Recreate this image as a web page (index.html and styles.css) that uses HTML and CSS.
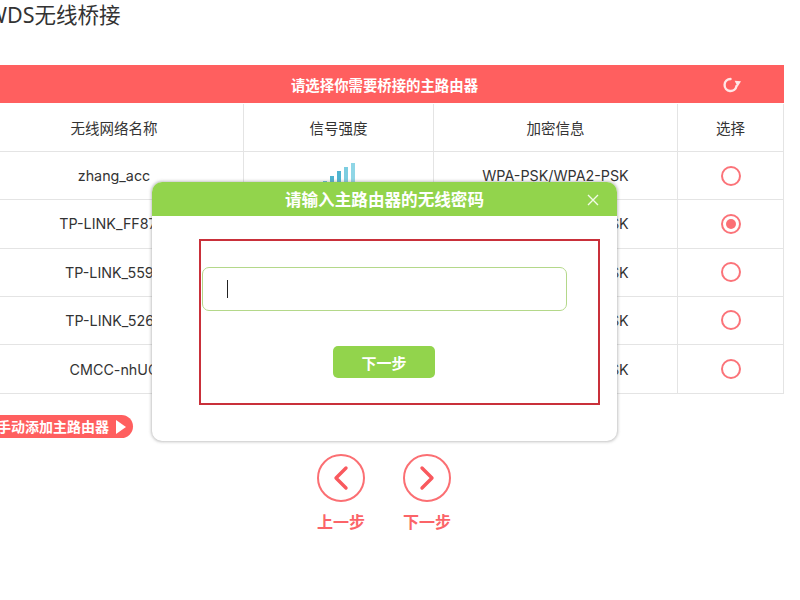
FILE: index.html
```html
<!DOCTYPE html>
<html lang="zh-CN">
<head>
<meta charset="utf-8">
<title>WDS无线桥接</title>
<link rel="stylesheet" href="styles.css">
</head>
<body>
<div class="page">
  <h1 class="title">WDS无线桥接</h1>
  <section class="panel">
    <div class="panel-head">
      <span>请选择你需要桥接的主路由器</span>
      <svg class="refresh" viewBox="0 0 20 20" width="20" height="20" aria-hidden="true">
        <path d="M9.5 5A6 6 0 1 0 15.5 12" fill="none" stroke="#ffe6e6" stroke-width="2.4" stroke-linecap="round"/>
        <path d="M13.6 6.8 20 7.2 16.6 12.8Z" fill="#ffe6e6"/>
      </svg>
    </div>
    <div class="grid">
      <div class="cell">无线网络名称</div><div class="cell">信号强度</div><div class="cell">加密信息</div><div class="cell last">选择</div>

      <div class="cell latin">zhang_acc</div>
      <div class="cell">
        <svg class="signal" viewBox="0 0 32 26" width="32" height="26" aria-hidden="true">
          <rect x="0" y="18" width="4" height="8" fill="#5dbcd6"/>
          <rect x="7" y="13" width="4" height="13" fill="#4fb4d0"/>
          <rect x="14" y="8" width="4" height="18" fill="#4fb4d0"/>
          <rect x="21" y="4" width="4" height="22" fill="#7ccde0"/>
          <rect x="28" y="0" width="4" height="26" fill="#8fd6e6"/>
        </svg>
      </div>
      <div class="cell latin">WPA-PSK/WPA2-PSK</div>
      <div class="cell last"><span class="radio"></span></div>

      <div class="cell latin offset">TP-LINK_FF87</div><div class="cell"></div><div class="cell latin">WPA-PSK/WPA2-PSK</div>
      <div class="cell last"><span class="radio on"></span></div>

      <div class="cell latin">TP-LINK_5594</div><div class="cell"></div><div class="cell latin">WPA-PSK/WPA2-PSK</div>
      <div class="cell last"><span class="radio"></span></div>

      <div class="cell latin">TP-LINK_5262</div><div class="cell"></div><div class="cell latin">WPA-PSK/WPA2-PSK</div>
      <div class="cell last"><span class="radio"></span></div>

      <div class="cell latin">CMCC-nhUC</div><div class="cell"></div><div class="cell latin">WPA-PSK/WPA2-PSK</div>
      <div class="cell last"><span class="radio"></span></div>
    </div>
  </section>

  <div class="manual">手动添加主路由器<svg class="tri" viewBox="0 0 12 16" width="12" height="16" aria-hidden="true"><path d="M1 1 11 8 1 15Z" fill="#fff"/></svg></div>

  <nav class="steps">
    <div class="step">
      <svg viewBox="0 0 48 48" width="48" height="48" aria-hidden="true"><circle cx="24" cy="24" r="23" fill="none" stroke="#fb6f73" stroke-width="2"/><path d="M29 14 19 24 29 34" fill="none" stroke="#f9595e" stroke-width="3.4" stroke-linecap="round" stroke-linejoin="round"/></svg>
      <span>上一步</span>
    </div>
    <div class="step">
      <svg viewBox="0 0 48 48" width="48" height="48" aria-hidden="true"><circle cx="24" cy="24" r="23" fill="none" stroke="#fb6f73" stroke-width="2"/><path d="M19 14 29 24 19 34" fill="none" stroke="#f9595e" stroke-width="3.4" stroke-linecap="round" stroke-linejoin="round"/></svg>
      <span>下一步</span>
    </div>
  </nav>
</div>

<div class="modal">
  <div class="modal-head">
    <span>请输入主路由器的无线密码</span>
    <svg class="close" viewBox="0 0 12 12" width="12" height="12" aria-hidden="true"><path d="M1 1 11 11M11 1 1 11" stroke="#f2fbe6" stroke-width="1.4" fill="none"/></svg>
  </div>
  <div class="modal-body">
    <div class="mark">
      <div class="input"><span class="caret"></span></div>
      <div class="next">下一步</div>
    </div>
  </div>
</div>
</body>
</html>
```

FILE: styles.css
```css
* { box-sizing: border-box; }
html, body { margin: 0; height: 100%; }
body {
  position: relative;
  width: 800px;
  height: 600px;
  overflow: hidden;
  background: #fff;
  color: #333;
  font-family: "Noto Sans", "Noto Sans CJK SC", sans-serif;
  font-size: 14.5px;
}
.page { width: 799px; margin-left: -15px; }
.title {
  margin: 0;
  height: 65px;
  padding-left: 2px;
  font-size: 21.5px;
  line-height: 30px;
  font-weight: 400;
  color: #333;
}
.panel-head {
  position: relative;
  height: 38px;
  background: #ff5f5f;
  color: #fff;
  font-weight: 700;
  font-size: 14.4px;
  display: flex;
  align-items: center;
  justify-content: center;
}
.refresh { position: absolute; right: 43px; top: 9px; }
.grid {
  display: grid;
  grid-template-columns: 259px 190px 244px 106px;
  grid-auto-rows: 48.2px;
  padding-top: 1px;
  border-bottom: 1px solid #e4e4e4;
}
.cell {
  display: flex;
  align-items: center;
  justify-content: center;
  border-right: 1px solid #e4e4e4;
  border-bottom: 1px solid #e4e4e4;
  white-space: nowrap;
}
.latin { font-family: "Inter", "Noto Sans", sans-serif; font-size: 14.3px; }
.offset { padding-right: 12px; }
.grid .cell:nth-last-child(-n+4) { border-bottom: 0; }
.radio {
  width: 20px;
  height: 20px;
  border-radius: 50%;
  border: 2.5px solid #fb7379;
  display: flex;
  align-items: center;
  justify-content: center;
}
.radio.on::after {
  content: "";
  width: 10px;
  height: 10px;
  border-radius: 50%;
  background: #fb6f75;
}
.manual {
  margin-top: 21px;
  width: 148px;
  height: 23px;
  padding-left: 12px;
  border-radius: 0 12px 12px 0;
  background: #ff5f5f;
  color: #fff;
  font-weight: 700;
  font-size: 14px;
  line-height: 23px;
  display: flex;
  align-items: center;
  gap: 6px;
}
.tri { flex: none; }
.steps {
  display: flex;
  justify-content: center;
  gap: 38px;
  margin-top: 16px;
  padding-right: 1px;
}
.step {
  width: 48px;
  display: flex;
  flex-direction: column;
  align-items: center;
  gap: 7px;
  color: #fb6468;
  font-weight: 700;
  font-size: 16px;
  white-space: nowrap;
}
.step svg { display: block; }
.modal {
  position: absolute;
  left: 152px;
  top: 182px;
  width: 465px;
  height: 259px;
  background: #fff;
  border-radius: 10px;
  box-shadow: 0 0 3px 1px rgba(120, 120, 120, 0.45);
  overflow: hidden;
}
.modal-head {
  position: relative;
  height: 34px;
  background: #92d44c;
  color: #fff;
  font-weight: 700;
  font-size: 16.6px;
  display: flex;
  align-items: center;
  justify-content: center;
}
.close { position: absolute; right: 18px; top: 12px; }
.modal-body { padding: 23px 17px 0 47px; }
.mark {
  width: 401px;
  height: 166px;
  border: 2px solid #c9303a;
  padding: 26px 0 0 1px;
}
.input {
  width: 365px;
  height: 44px;
  border: 1px solid #b4d88a;
  border-radius: 7px;
  padding: 12px 0 0 24px;
}
.caret { display: block; width: 1px; height: 18px; background: #222; }
.next {
  width: 102px;
  height: 32px;
  margin: 35px 0 0 131px;
  border-radius: 5px;
  background: #92d44c;
  color: #fff;
  font-weight: 700;
  font-size: 15px;
  display: flex;
  align-items: center;
  justify-content: center;
}
```
